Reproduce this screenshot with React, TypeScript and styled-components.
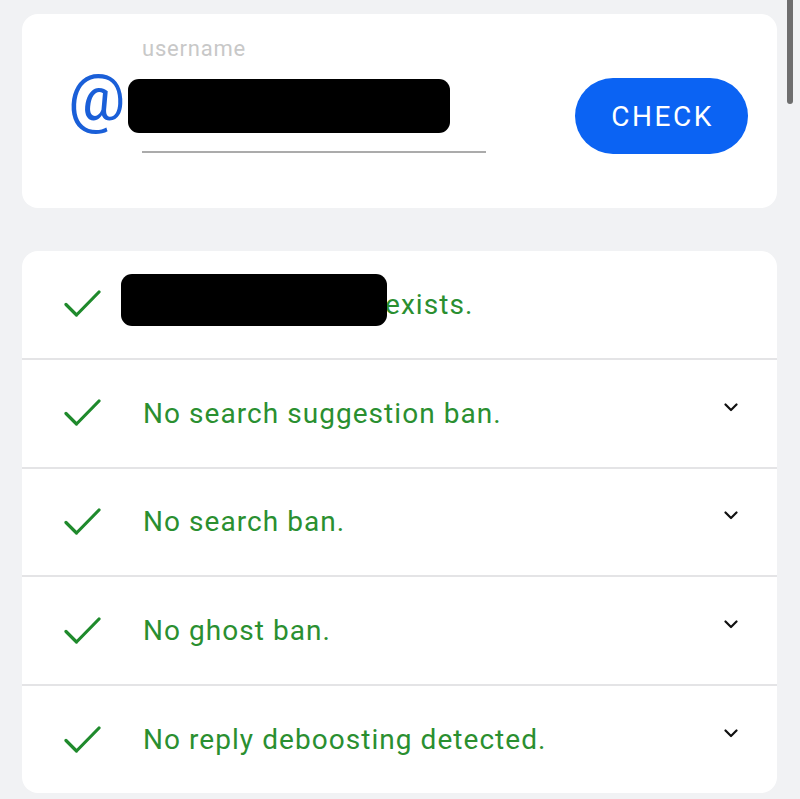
import React from "react";
import styled, { createGlobalStyle } from "styled-components";

const Global = createGlobalStyle`
  html, body { margin: 0; padding: 0; background: #f1f2f4; }
  body { font-family: Roboto, "Noto Sans", Arial, sans-serif; }
  * { box-sizing: border-box; }
`;

const Page = styled.div`
  position: relative;
  width: 800px;
  height: 799px;
  overflow: hidden;
  padding: 14px 23px 0 22px;
  display: flex;
  flex-direction: column;
  gap: 43px;
`;

const ScrollThumb = styled.div`
  position: absolute;
  top: 0;
  left: 787px;
  width: 6px;
  height: 104px;
  border-radius: 0 0 3px 3px;
  background: #6e6e6e;
`;

const Card = styled.div`
  background: #ffffff;
  border-radius: 16px;
  overflow: hidden;
`;

const SearchCard = styled(Card)`
  height: 194px;
  display: flex;
  align-items: flex-start;
  padding: 0 29px 0 46px;
`;

const AtSign = styled.span`
  margin-top: 50px;
  font-size: 64px;
  line-height: 70px;
  color: #1a5fd8;
  width: 74px;
  font-weight: 400;
`;

const Field = styled.div`
  display: flex;
  flex-direction: column;
  width: 344px;
  padding-top: 22px;
`;

const Label = styled.div`
  font-size: 22px;
  line-height: 26px;
  letter-spacing: 0.8px;
  color: #c8c8c8;
`;

const InputArea = styled.div`
  position: relative;
  height: 54px;
  margin-top: 17px;
`;

const Redaction = styled.div<{ $left: number; $top: number; $width: number; $height: number }>`
  position: absolute;
  top: ${(p) => p.$top}px;
  left: ${(p) => p.$left}px;
  width: ${(p) => p.$width}px;
  height: ${(p) => p.$height}px;
  background: #000;
  border-radius: 11px;
`;

const Underline = styled.div`
  margin-top: 18px;
  height: 2px;
  background: #ababab;
`;

const CheckButton = styled.button`
  margin-left: auto;
  margin-top: 64px;
  width: 173px;
  height: 76px;
  border: none;
  border-radius: 38px;
  background: #0b63f3;
  color: #ffffff;
  font-family: Roboto, "Noto Sans", Arial, sans-serif;
  font-size: 28px;
  letter-spacing: 2.5px;
  padding: 0 0 0 2px;
`;

const ResultsCard = styled(Card)`
  display: flex;
  flex-direction: column;
  height: 542px;
`;

const Row = styled.div`
  position: relative;
  flex: 1;
  display: flex;
  align-items: center;
  padding: 0 39px 0 42px;
  & + & {
    border-top: 2px solid #e4e4e6;
  }
`;

const CheckIcon = styled.svg`
  width: 37px;
  height: 28px;
  flex-shrink: 0;
  margin-right: 42px;
`;

const RowText = styled.span`
  font-size: 28px;
  letter-spacing: 1.05px;
  color: #2a8f30;
  flex: 1;
`;

const RedactedInline = styled.span`
  display: inline-block;
  width: 242px;
  height: 1px;
`;

const Chevron = styled.svg`
  width: 14px;
  height: 9px;
  margin-top: -12px;
`;

const Check = () => (
  <CheckIcon viewBox="0 0 37 28">
    <path d="M2 14.5 L12.5 25 L35 2" fill="none" stroke="#1f8a2c" strokeWidth="3.2" strokeLinecap="round" strokeLinejoin="round" />
  </CheckIcon>
);

const Down = () => (
  <Chevron viewBox="0 0 14 9">
    <path d="M1.5 1.5 L7 7 L12.5 1.5" fill="none" stroke="#111" strokeWidth="2.2" strokeLinecap="round" strokeLinejoin="round" />
  </Chevron>
);

const results = [
  "No search suggestion ban.",
  "No search ban.",
  "No ghost ban.",
  "No reply deboosting detected.",
];

export default function App() {
  return (
    <>
      <Global />
      <Page>
        <SearchCard>
          <AtSign>@</AtSign>
          <Field>
            <Label>username</Label>
            <InputArea>
              <Redaction $left={-14} $top={0} $width={322} $height={54} />
            </InputArea>
            <Underline />
          </Field>
          <CheckButton>CHECK</CheckButton>
        </SearchCard>
        <ResultsCard>
          <Row>
            <Check />
            <RowText>
              <RedactedInline />
              exists.
            </RowText>
            <Redaction $left={99} $top={23} $width={266} $height={52} />
          </Row>
          {results.map((r) => (
            <Row key={r}>
              <Check />
              <RowText>{r}</RowText>
              <Down />
            </Row>
          ))}
        </ResultsCard>
        <ScrollThumb />
      </Page>
    </>
  );
}
